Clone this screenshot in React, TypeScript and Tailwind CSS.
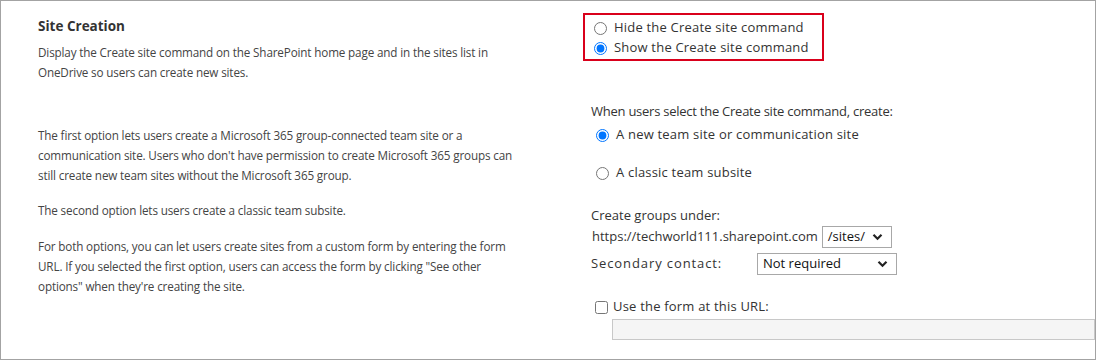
import React from 'react';

function Chevron() {
  return (
    <svg width="11" height="8" viewBox="0 0 11 8" fill="none">
      <path d="M1.5 1.8 L5.5 5.8 L9.5 1.8" stroke="#222" strokeWidth="2.2" />
    </svg>
  );
}

function FakeSelect({ value, width }: { value: string; width: string }) {
  return (
    <div className={`${width} h-[22px] border border-[#a8a8a8] bg-white flex items-center justify-between pl-[5px] pr-[8px] text-[13px] text-[#111]`}>
      <span>{value}</span>
      <Chevron />
    </div>
  );
}

function Radio({ checked, label, group }: { checked?: boolean; label: string; group: string }) {
  return (
    <label className="flex items-center h-[20px] gap-[7px] tracking-[0.2px]">
      <input type="radio" defaultChecked={checked} name={group} className="m-0 w-[13px] h-[13px] accent-[#0075ff]" />
      <span>{label}</span>
    </label>
  );
}

export default function App() {
  return (
    <div className="w-[1096px] h-[360px] bg-white border border-[#a3a3a3] flex font-['Segoe_UI','Open_Sans',sans-serif]">
      <div className="w-[545px] pl-[37px] pt-[15px] text-[11.7px] tracking-[-0.15px] leading-[20px] text-[#444]">
        <h2 className="text-[13.5px] tracking-normal font-bold text-[#333] leading-[20px]">Site Creation</h2>
        <div className="w-[482px]">
          <p className="mt-[6px]">
            Display the Create site command on the SharePoint home page and in the sites list in OneDrive so users can create new sites.
          </p>
          <p className="mt-[43px]">
            The first option lets users create a Microsoft 365 group-connected team site or a communication site. Users who don't have permission to create Microsoft 365 groups can still create new team sites without the Microsoft 365 group.
          </p>
          <p className="mt-[15px]">The second option lets users create a classic team subsite.</p>
          <p className="mt-[16px]">
            For both options, you can let users create sites from a custom form by entering the form URL. If you selected the first option, users can access the form by clicking "See other options" when they're creating the site.
          </p>
        </div>
      </div>
      <div className="flex-1 pl-[37px] pt-[12px] text-[13px] text-[#333]">
        <div className="w-[241px] border-2 border-[#d9001b] px-[9px] pt-[3px] pb-[1px]">
          <Radio group="cmd" label="Hide the Create site command" />
          <Radio group="cmd" checked label="Show the Create site command" />
        </div>
        <div className="ml-[8px] mt-[40px] leading-[20px] tracking-[-0.25px]">When users select the Create site command, create:</div>
        <div className="ml-[13px] mt-[4px]">
          <Radio group="kind" checked label="A new team site or communication site" />
          <div className="mt-[18px]">
            <Radio group="kind" label="A classic team subsite" />
          </div>
        </div>
        <div className="ml-[8px] mt-[22px] leading-[20px]">Create groups under:</div>
        <div className="ml-[9px] mt-[1px] flex items-center gap-[4px]">
          <span>https://techworld111.sharepoint.com</span>
          <FakeSelect value="/sites/" width="w-[70px]" />
        </div>
        <div className="ml-[8px] mt-[5px] flex items-center">
          <span className="w-[166px] tracking-[0.9px]">Secondary contact:</span>
          <FakeSelect value="Not required" width="w-[140px]" />
        </div>
        <label className="ml-[12px] mt-[22px] flex items-center gap-[5px] h-[20px]">
          <input type="checkbox" className="m-0 w-[13px] h-[13px]" />
          <span className="tracking-[0.2px]">Use the form at this URL:</span>
        </label>
        <div className="ml-[29px] mt-[2px] h-[21px] bg-[#f5f5f5] border border-[#c8c8c8]" />
      </div>
    </div>
  );
}
